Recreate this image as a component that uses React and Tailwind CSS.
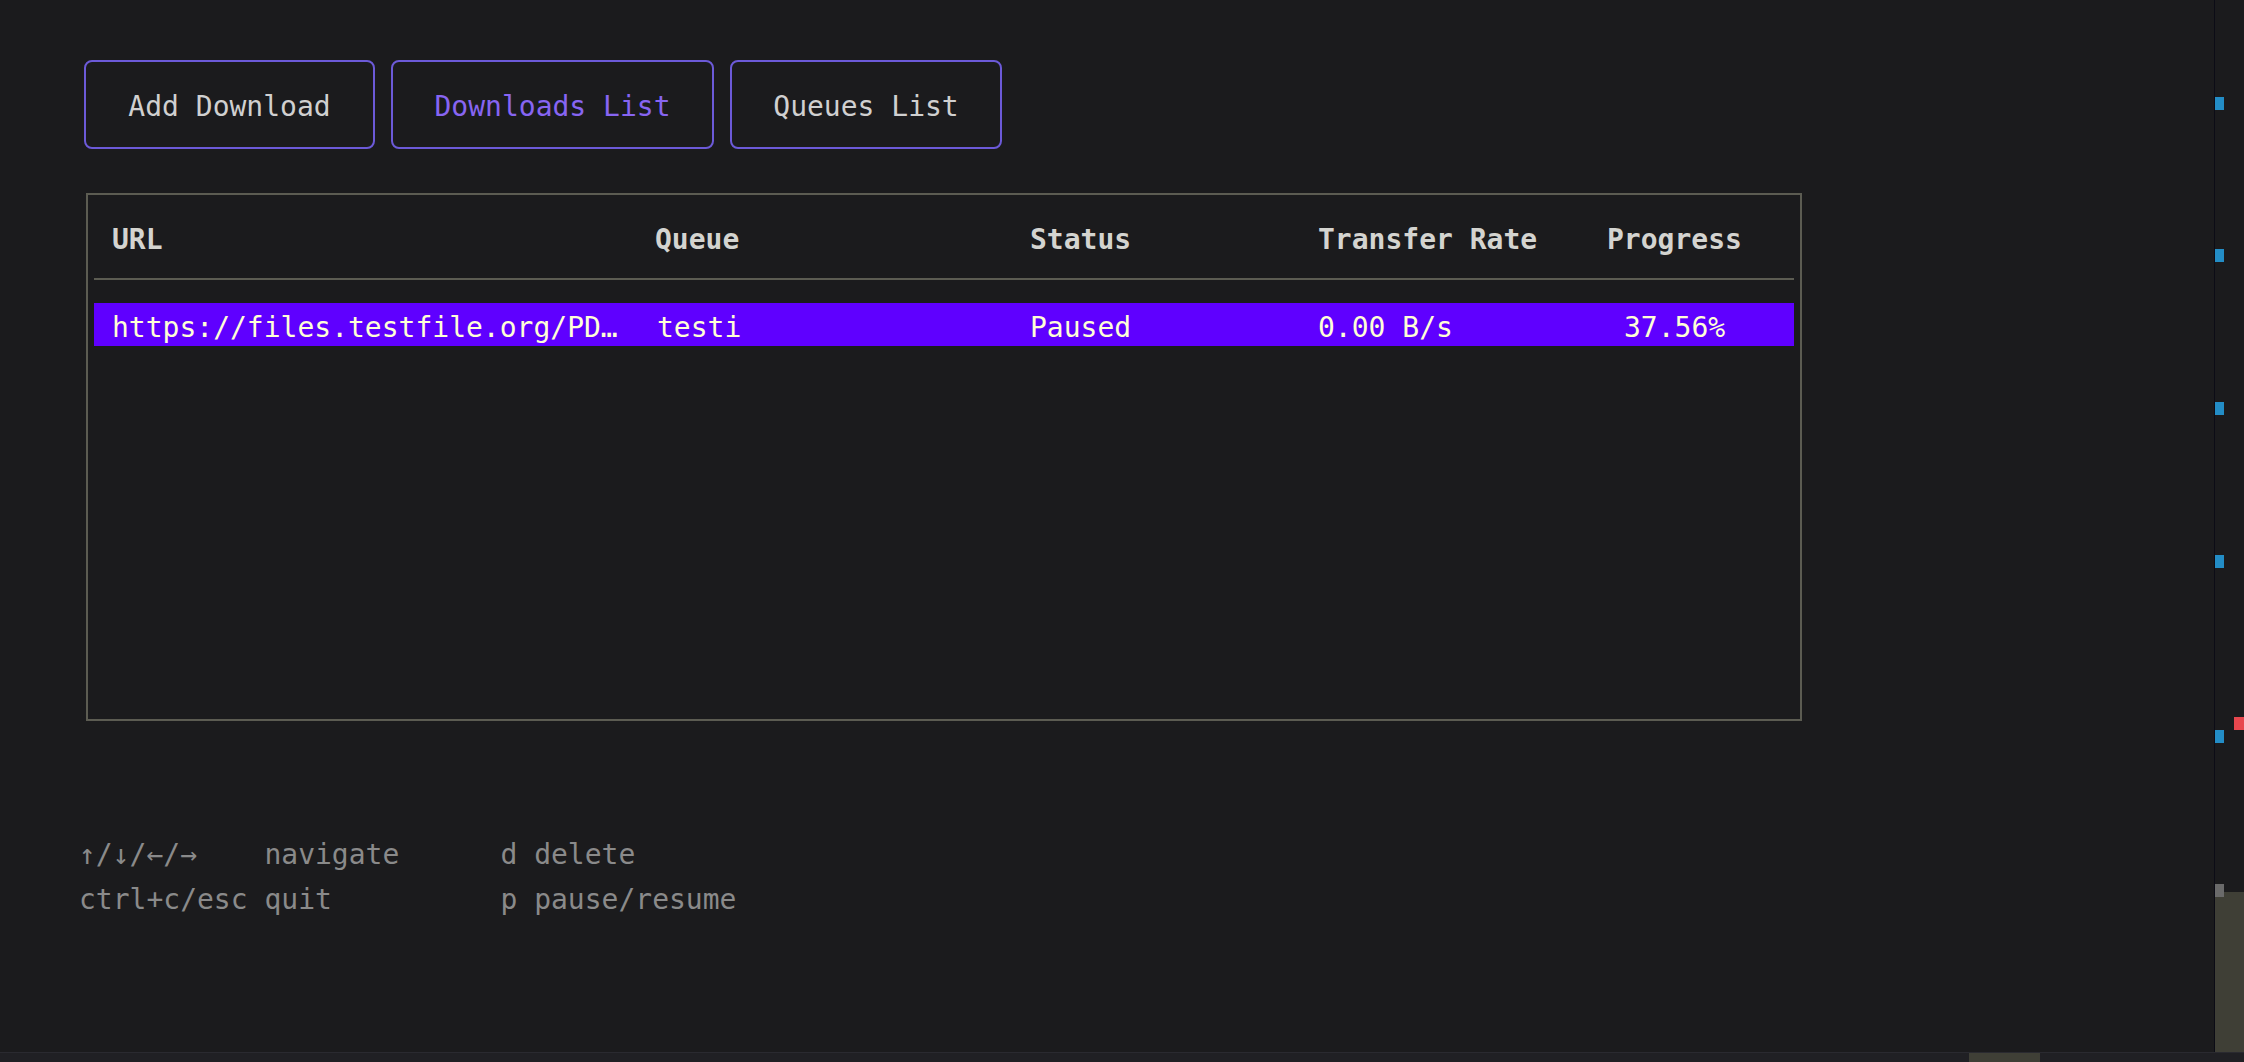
import React from "react";

const tabs = [
  { label: "Add Download", w: "w-[291px]", active: false },
  { label: "Downloads List", w: "w-[323px]", active: true },
  { label: "Queues List", w: "w-[272px]", active: false },
];

const rows = [
  {
    url: "https://files.testfile.org/PD…",
    queue: "testi",
    status: "Paused",
    rate: "0.00 B/s",
    progress: "37.56%",
  },
];

const markers = ["top-[97px]", "top-[249px]", "top-[402px]", "top-[555px]", "top-[730px]"];

const App = () => {
  return (
    <div
      className="w-[2244px] h-[1062px] overflow-hidden bg-[#1b1b1d] flex flex-col text-[28px]"
      style={{ fontFamily: '"DejaVu Sans Mono", "Liberation Mono", monospace' }}
    >
      <div className="flex h-[1052px]">
        {/* terminal body */}
        <main className="flex-1 pl-[79px] pt-[60px]">
          <div className="flex gap-[16px] ml-[5px]">
            {tabs.map((t) => (
              <div
                key={t.label}
                className={`${t.w} h-[89px] pt-[4px] border-2 border-[#6c5ad8] rounded-[8px] flex items-center justify-center ${
                  t.active ? "text-[#8765f2]" : "text-[#d0d0d0]"
                }`}
              >
                {t.label}
              </div>
            ))}
          </div>

          {/* downloads table */}
          <div className="mt-[44px] ml-[7px] w-[1716px] h-[528px] border-2 border-[#5c5c52]">
            <div className="mt-[23px] h-[43px] leading-[43px] pl-[24px] grid grid-cols-[543px_375px_288px_289px_1fr] font-bold text-[#d4d4d0]">
              <span>URL</span>
              <span>Queue</span>
              <span>Status</span>
              <span>Transfer Rate</span>
              <span>Progress</span>
            </div>
            <div className="mt-[17px] mx-[6px] h-[2px] bg-[#5c5c52]" />
            {rows.map((r) => (
              <div
                key={r.url}
                className="mt-[23px] mx-[6px] h-[43px] leading-[43px] pt-[3px] pl-[18px] bg-[#5f00ff] text-[#ffffd7] grid grid-cols-[545px_373px_288px_289px_1fr] whitespace-pre"
              >
                <span>{r.url}</span>
                <span>{r.queue}</span>
                <span>{r.status}</span>
                <span>{r.rate}</span>
                <span className="pl-[17px]">{r.progress}</span>
              </div>
            ))}
          </div>

          {/* key help */}
          <div className="mt-[111px] text-[#8a8a8a] leading-[45px] whitespace-pre">
            <div>{"↑/↓/←/→    navigate      d delete"}</div>
            <div>{"ctrl+c/esc quit          p pause/resume"}</div>
          </div>
        </main>

        {/* overview ruler / scrollbar */}
        <div className="w-px bg-[#0c0c16]" />
        <div className="relative w-[29px] flex flex-col justify-end">
          {markers.map((m) => (
            <div key={m} className={`absolute left-0 ${m} w-[9px] h-[13px] bg-[#238dc6]`} />
          ))}
          <div className="absolute left-[19px] top-[717px] w-[10px] h-[13px] bg-[#e8474e]" />
          <div className="absolute left-0 top-[884px] w-[9px] h-[13px] bg-[#6a6a6a]" />
          <div className="h-[160px] bg-[#3f3f36]" />
        </div>
      </div>

      {/* horizontal scrollbar */}
      <div className="h-[10px] bg-[#202024] border-t border-[#2a2a30]">
        <div className="ml-[1969px] w-[71px] h-full bg-[#3f3f36]" />
      </div>
    </div>
  );
};

export default App;
